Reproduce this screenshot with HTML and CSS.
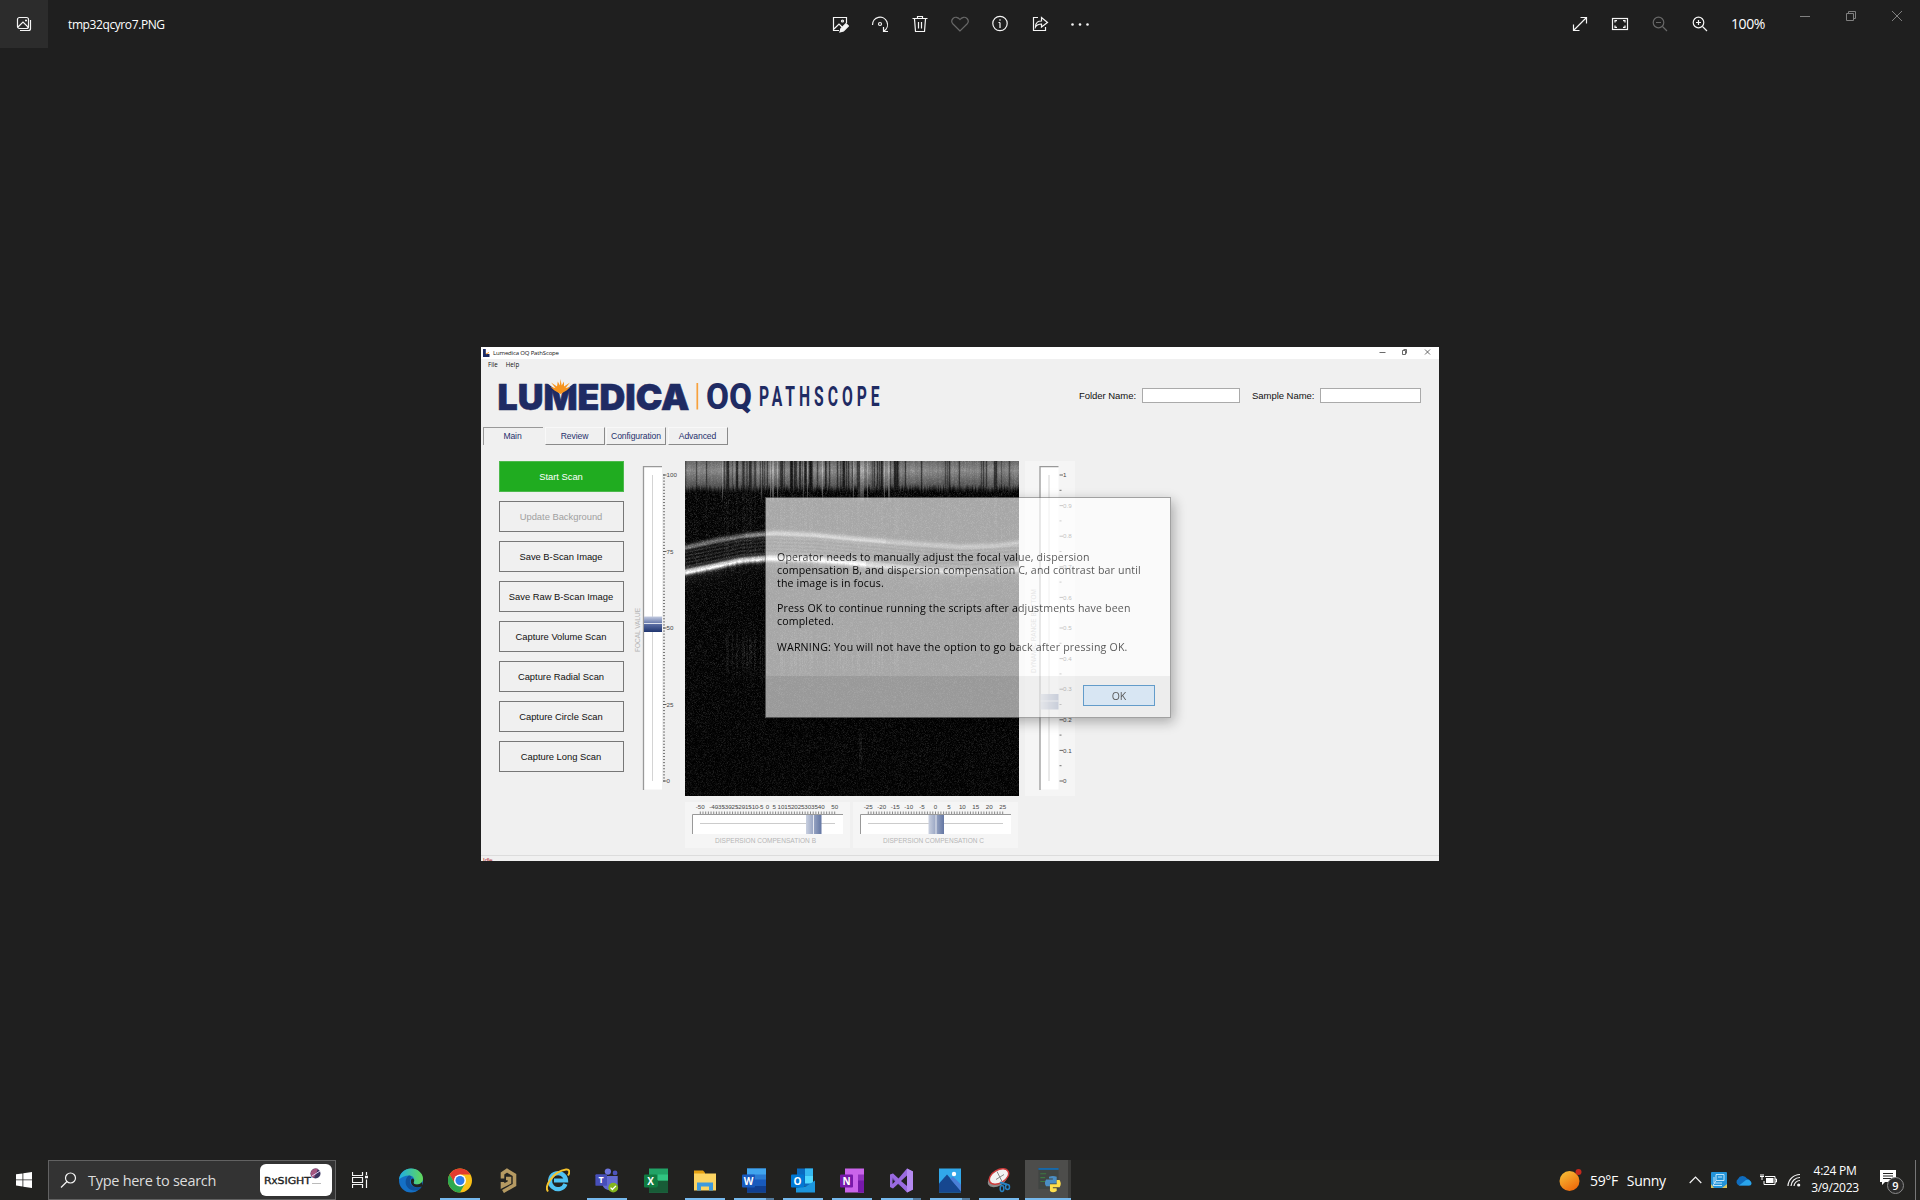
FILE: index.html
```html
<!DOCTYPE html>
<html lang="en">
<head>
<meta charset="utf-8">
<title>tmp32qcyro7.PNG</title>
<link rel="stylesheet" href="styles.css">
</head>
<body>
<header class="viewer-bar">
  <div class="viewer-tile">
    <svg width="16" height="16" viewBox="0 0 16 16" class="line"><rect x="1.5" y="1.5" width="11" height="11" rx="2"/><path d="M4 14.5h8.5a2 2 0 0 0 2-2V4M2 11l5-5 5.5 5.500"/><path d="M9 4.500h2M10 3.500v2"/></svg>
  </div>
  <div class="file-name">tmp32qcyro7.PNG</div>
  <nav class="tools">
    <svg viewBox="0 0 18 18" class="line"><path d="M8 15.500H2.500v-13h13V8M3 14l5-5 3 3"/><circle cx="11.500" cy="6" r="1"/><path class="solid" d="M9 17l1-3.500 5-5 2.500 2.500-5 5z"/></svg>
    <svg viewBox="0 0 18 18" class="line"><path d="M1.500 10a7.500 7.500 0 1 1 11.500 6M12.500 12v4.500H17"/><circle cx="9" cy="9" r="1.500"/></svg>
    <svg viewBox="0 0 18 18" class="line"><path d="M1.500 3.500h15M6.500 3.500v-2h5v2M3.500 4l1 12.500h9l1-12.500M7.500 7v6.500M10.500 7v6.500"/></svg>
    <svg viewBox="0 0 18 18" class="line dim"><path d="M9 16L2 9a4 4 0 0 1 0-5.500c2-2 5-1.500 7 1 2-2.500 5-3 7-1A4 4 0 0 1 16 9z"/></svg>
    <svg viewBox="0 0 18 18" class="line"><circle cx="9" cy="8.500" r="7.200"/><path d="M9 7.500V13M7.500 7.500H9M9 4.300v1.400"/></svg>
    <svg viewBox="0 0 18 18" class="line"><path d="M7 2.500H2.500v13h12V12M4.500 12c0-5 3-6 6-6V2.500L16.500 7.500l-6 4.500V9c-3 0-4.500.5-6 3z"/></svg>
    <svg viewBox="0 0 18 18" class="dots"><circle cx="1.500" cy="9.500" r="1.300"/><circle cx="9" cy="9.500" r="1.300"/><circle cx="16.500" cy="9.500" r="1.300"/></svg>
  </nav>
  <nav class="zoom-tools">
    <svg viewBox="0 0 18 18" class="line"><path d="M2.500 15.500l13-13M9.500 2.500h6v6M2.500 9.500v6h6"/></svg>
    <svg viewBox="0 0 18 18" class="line"><rect x="1.500" y="3.500" width="15" height="11"/><path d="M4 7.500V5.700h2M12 5.700h2v1.800M14 10.500v1.800h-2M6 12.300H4v-1.800"/></svg>
    <svg viewBox="0 0 18 18" class="line dim"><circle cx="7.500" cy="7.500" r="5.300"/><path d="M5 7.500h5M11.500 11.500l4.500 4.500"/></svg>
    <svg viewBox="0 0 18 18" class="line"><circle cx="7.500" cy="7.500" r="5.300"/><path d="M5 7.500h5M7.500 5v5M11.500 11.500l4.500 4.500"/></svg>
  </nav>
  <div class="zoom-level">100%</div>
  <div class="caption">
    <svg viewBox="0 0 12 12" class="line"><path d="M1 6.500h10"/></svg>
    <svg viewBox="0 0 12 12" class="line"><path d="M1.500 3.500h7v7h-7zM3.500 3.500v-2h7v7h-2"/></svg>
    <svg viewBox="0 0 12 12" class="line"><path d="M1 1l10 10M11 1L1 11"/></svg>
  </div>
</header>

<main class="stage">
  <section class="app">
    <div class="titlebar">
      <svg width="7" height="8" viewBox="0 0 7 8"><path d="M0 0h2.800v5H6.500v3H0z" fill="#1c2b63"/><path d="M3 5l3-1.500" stroke="#f7941d"/></svg>
      <span class="app-title">Lumedica OQ PathScope</span>
      <svg class="winbtns" width="56" height="10" viewBox="0 0 56 10"><path d="M1.500 5.500h6M24.500 3.500h3v4h-3zM25.500 2.500h3v4M47 2.500l5 5M52 2.500l-5 5"/></svg>
    </div>
    <div class="menubar"><span>File</span><span>Help</span></div>
    <div class="brand-row">
      <svg class="logo" width="384" height="38" viewBox="0 0 384 38">
        <text x="-1.500" y="32.500" class="logo-main" textLength="192" lengthAdjust="spacingAndGlyphs">LUMEDICA</text>
        <path class="sun-gap" d="M47.500 5.500l14 11.500L76 5.500z"/>
        <path class="sun" d="M61.500 17l-6-3.500-4-3.500 5 1-4.500-5.500 6 4L58.800 4.500l2 4L61.500 2l1.200 6.500 2.300-4v5l6-4-4.500 5.500 5-1-4 3.500z"/>
        <path d="M198.300 6v26.500" stroke="#f7a13d" stroke-width="1.700"/>
        <text x="207" y="32.300" class="logo-oq" textLength="46" lengthAdjust="spacingAndGlyphs">OQ</text>
        <text x="0" y="0" transform="translate(260 29.300) scale(.58 1)" class="logo-path" textLength="208">PATHSCOPE</text>
      </svg>
      <div class="fields">
        <span class="field-label folder">Folder Name:</span><span class="input w98"></span>
        <span class="field-label sample">Sample Name:</span><span class="input w101"></span>
      </div>
    </div>
    <div class="tabs"><span class="tab on">Main</span><span class="tab">Review</span><span class="tab">Configuration</span><span class="tab">Advanced</span></div>
    <div class="work">
      <div class="buttons">
        <span class="btn start">Start Scan</span><span class="btn off">Update Background</span><span class="btn">Save B-Scan Image</span><span class="btn">Save Raw B-Scan Image</span><span class="btn">Capture Volume Scan</span><span class="btn">Capture Radial Scan</span><span class="btn">Capture Circle Scan</span><span class="btn">Capture Long Scan</span>
      </div>
      <svg class="slider-focal" id="focal" width="50" height="335"></svg>
      <div class="scan-col">
        <canvas id="scan" width="334" height="335"></canvas>
        <div class="disp-row">
          <svg class="panel" id="dispB" width="165" height="46"></svg>
          <svg class="panel" id="dispC" width="165" height="46"></svg>
        </div>
      </div>
      <svg class="panel slider-range" id="range" width="50" height="335"></svg>
    </div>
    <div class="status"><span class="status-text">Idle</span></div>
    <div class="dialog">
      <div class="dialog-body">
        <p>Operator needs to manually adjust the focal value, dispersion<br>compensation B, and dispersion compensation C, and contrast bar until<br>the image is in focus.</p>
        <p>Press OK to continue running the scripts after adjustments have been<br>completed.</p>
        <p class="warn">WARNING: You will not have the option to go back after pressing OK.</p>
      </div>
      <div class="dialog-foot"><span class="ok">OK</span></div>
    </div>
  </section>
</main>

<footer class="taskbar">
  <div class="start-btn"><svg width="16" height="16" viewBox="0 0 16 16"><path fill="#fff" d="M0 2.300L6.500 1.400v6.100H0zM7.300 1.300L16 0v7.500H7.300zM0 8.300h6.500v6.200L0 13.600zM7.300 8.300H16V16l-8.700-1.300z"/></svg></div>
  <div class="search">
    <svg width="17" height="17" viewBox="0 0 17 17" class="line"><circle cx="10.500" cy="6" r="5"/><path d="M7 9.500L1 15.500"/></svg>
    <span class="search-text">Type here to search</span>
    <span class="pill"><svg width="72" height="32" viewBox="0 0 72 32"><text x="4" y="20" class="rx" textLength="47" lengthAdjust="spacingAndGlyphs">R<tspan class="rx-x">X</tspan>SIGHT</text><circle cx="55.500" cy="9.500" r="5" fill="#3a3561"/><path d="M51 8a5 5 0 0 1 7-3l-4 9a5 5 0 0 1-3-6z" fill="#a4557f"/><path d="M52 12l8-5" stroke="#dce" stroke-width="1"/><path d="M52 19.500h9" stroke="#bbb"/></svg></span>
  </div>
  <div class="taskview"><svg width="17" height="16" viewBox="0 0 17 16" class="line"><path d="M.5 0v3.500h10V0M.5 16v-3.500h10V16M.5 5.500h10v5H.5zM14.500 0v3M14.500 7.500V16"/><path d="M13 5h3" stroke-width="2.500"/></svg></div>
  <div class="apps">
    <div class="cell"><svg viewBox="0 0 24 24"><defs><linearGradient id="eg" x2="1"><stop stop-color="#1eaee5"/><stop offset="1" stop-color="#62d957"/></linearGradient></defs><circle cx="12" cy="12" r="12" fill="#1470c6"/><path d="M0 11C1 4 6 0 12 0c7 0 12 5 12 10 0 4-3 6-6 6-3 0-4-1-3-3 1-3-1-6-5-6-4 0-8 2-10 4z" fill="url(#eg)"/><path d="M10 7c-6 4-4 15 6 15 3 0 5-1 7-4-4 2-11 1-12-4-.3-2 0-3 1-4 1-2 0-3-2-3z" fill="#10519b"/><path d="M15 13c-1 2 0 3 3 3 2 0 4-1 5-2.500V18c-4 1.500-10 1-11-4-.3-2 0-3 1-4 2 0 2.500 1.500 2 3z" fill="#222220"/></svg></div>
    <div class="cell run"><svg viewBox="0 0 24 24"><circle cx="12" cy="12" r="12" fill="#fbc116"/><path d="M1.600 6A12 12 0 0 1 22.400 6H12l-5 9z" fill="#e33b2e"/><path d="M1.600 6A12 12 0 0 0 12 24l5-9-10 0z" fill="#2da94f"/><circle cx="12" cy="12" r="6" fill="#fff"/><circle cx="12" cy="12" r="4.500" fill="#2f7de9"/></svg></div>
    <div class="cell"><svg viewBox="0 0 24 24" fill="none" stroke="#b59a62" stroke-width="3.600"><path d="M5.500 10V5l4.500-3L17.500 6.500v10L6 23M5.500 13.500v4l7-3.500v-4H9"/></svg></div>
    <div class="cell"><svg viewBox="0 0 24 24"><path d="M19.500 15.500A8 8 0 1 1 20 12H8" fill="none" stroke="#4fc3f3" stroke-width="4.200"/><path d="M2 23C-2 18 7 3 20 1c4-.5 4 3 2 6" fill="none" stroke="#f5c32c" stroke-width="2"/></svg></div>
    <div class="cell run"><svg viewBox="0 0 26 28"><circle cx="14" cy="4" r="3.500" fill="#6d74dc"/><circle cx="22" cy="5.500" r="2.700" fill="#4d55bd"/><path d="M8 9h17v9c0 5-4 7-8 7s-8-2-9-6z" fill="#636bd2"/><rect y="7" width="13" height="13" rx="1" fill="#474fb9"/><text x="6.500" y="17" class="ico">T</text><circle cx="20" cy="22" r="5.500" fill="#83b51d"/><path d="M17 22l2 2 4-4" stroke="#fff" fill="none" stroke-width="1.500"/></svg></div>
    <div class="cell"><svg viewBox="0 0 24 24"><path d="M5 0h19v24H5z" fill="#21a366"/><path d="M5 12h19v12H5z" fill="#185c37"/><path d="M14 6h10v6H14z" fill="#31c481"/><path d="M5 12h9v6H5z" fill="#107c41"/><rect y="6" width="13" height="13" rx="1" fill="#107c41"/><text x="6.500" y="16.500" class="ico">X</text></svg></div>
    <div class="cell run"><svg viewBox="0 0 24 24"><path d="M1 2h9l2 2v5H1z" fill="#e5a112"/><path d="M1 5h22v17H1z" fill="#fcd462"/><path d="M4 22v-8h16v8h-4v-4H8v4z" fill="#3e9ade"/></svg></div>
    <div class="cell run more"><svg viewBox="0 0 24 24"><path d="M5 0h19v24H5z" fill="#2b7cd3"/><path d="M5 0h19v6H5z" fill="#41a5ee"/><path d="M5 17h19v7H5z" fill="#103f91"/><path d="M5 11h19v6H5z" fill="#185abd"/><rect y="6" width="13" height="13" rx="1" fill="#185abd"/><text x="6.500" y="16.500" class="ico">W</text></svg></div>
    <div class="cell run"><svg viewBox="0 0 24 24"><path d="M6 0h16v18H6z" fill="#0a6abf"/><path d="M14 0h8v7h-8z" fill="#35b8f1"/><path d="M14 7h8v8h-8z" fill="#50d9ff"/><path d="M5 24h19V12l-9 6-10 1z" fill="#1c96dd"/><rect y="6" width="13" height="13" rx="1" fill="#0078d4"/><text x="6.500" y="16.500" class="ico">O</text></svg></div>
    <div class="cell run"><svg viewBox="0 0 24 24"><path d="M5 0h19v24H5z" fill="#ca64ea"/><path d="M18 6h6v18h-6z" fill="#9332bf"/><path d="M18 12h6v12h-6z" fill="#7719aa"/><rect y="6" width="13" height="13" rx="1" fill="#7719aa"/><text x="6.500" y="16.500" class="ico">N</text></svg></div>
    <div class="cell run more"><svg viewBox="0 0 24 24"><path d="M1 7l3-2 14 15v3L1 9z" fill="#6a48a5"/><path fill-rule="evenodd" d="M18 0l6 3v18l-6 3L9.500 15 4 20l-3-1.500V6l3-1 5.500 5zM3.500 9v6.500L6.500 12.500zM18 7l-6 5.500 6 5z" fill="#9a6be0"/><path d="M18 0l6 3v18l-6 3z" fill="#b58af0"/></svg></div>
    <div class="cell run more"><svg viewBox="0 0 24 24"><path d="M1 0h22v24H1z" fill="#31a8ea"/><path d="M1 15L9 6l14 16v2H1z" fill="#16478f"/><path d="M12 10l3-2 8 8v7z" fill="#4a7fd8"/><circle cx="16" cy="5.500" r="2.200" fill="#fff"/></svg></div>
    <div class="cell run"><svg viewBox="0 0 24 24"><ellipse cx="10.500" cy="11" rx="10.500" ry="6.500" transform="rotate(-30 10.500 11)" fill="#8b8b8b"/><ellipse cx="12" cy="8" rx="10.500" ry="6.500" transform="rotate(-30 12 8)" fill="#f3f3f3" stroke="#cf3b3b" stroke-width="1.500"/><path d="M10 3l5 10M17 6l-8 5" stroke="#888"/><path d="M13 14l7 2" stroke="#2682c4" stroke-width="2"/><g fill="none" stroke="#2682c4" stroke-width="1.500"><ellipse cx="15" cy="20" rx="1.800" ry="3"/><ellipse cx="20.500" cy="18.500" rx="2" ry="2.500"/></g></svg></div>
    <div class="cell run active"><svg viewBox="0 0 24 26"><path d="M1 0h21v22H1z" fill="#404542"/><path d="M1 0h21v2H1z" fill="#1769aa"/><path d="M3 6h6M3 10h5M3 14h5" stroke="#3d7a42" stroke-width="1.200"/><path d="M12 9q4-1.500 8 0v7h-7v3H9q-2.500-3 0-7h7v-1h-4z" fill="#4b8ec4"/><path d="M20 12.500h3q2.500 4 0 7.500h-7v1h4v3q-4 2.500-7 0v-7h7z" fill="#ffdf4c"/></svg></div>
  </div>
  <div class="weather"><svg width="24" height="24" viewBox="0 0 24 24"><defs><linearGradient id="wg" x2=".6" y2="1"><stop stop-color="#f8c53a"/><stop offset="1" stop-color="#ef6c0c"/></linearGradient></defs><circle cx="10.500" cy="13" r="10" fill="url(#wg)"/><circle cx="19.500" cy="4" r="3" fill="#c5281c"/></svg><span class="temp">59°F</span><span>Sunny</span></div>
  <div class="tray">
    <svg width="13" height="8" viewBox="0 0 13 8" class="line"><path d="M.7 7L6.500 1.200 12.300 7"/></svg>
    <svg width="16" height="16" viewBox="0 0 16 16"><rect width="16" height="16" rx="1" fill="#2393d8"/><path d="M5 2.500h8v6H5zM3 5v6h8M5 8.500l-3 5h9M7 5h4" fill="none" stroke="#bfe5fa" stroke-width="1"/><path d="M0 12l3 4H0zM11 16l5-4v4z" fill="#d9c45d"/></svg>
    <svg width="17" height="11" viewBox="0 0 17 11"><path d="M4 10.500A3.700 3.700 0 0 1 3 4a5 5 0 0 1 9-.5 4 4 0 0 1 2 7z" fill="#0f6cbd"/><path d="M4 10.500L11 5a4 4 0 0 1 5.500 3c0 2-1 2.500-2.500 2.500z" fill="#2aa4ea"/></svg>
    <svg width="17" height="12" viewBox="0 0 17 12"><path d="M5 2.500h10v8H4V7M15 5h1.500v3H15" fill="none" stroke="#fff"/><path d="M6 4h7.500v5H6z" fill="#fff"/><path d="M0 2.500h4M1 0v2M3 0v2M2 3v3" stroke="#fff"/></svg>
    <svg width="14" height="14" viewBox="0 0 14 14" class="line"><path d="M1 13A12 12 0 0 1 13 1.500M4 13a9 9 0 0 1 9-8.500M7 13a6 6 0 0 1 6-5.500"/><circle cx="11.700" cy="12" r="1" fill="#fff"/></svg>
  </div>
  <div class="clock"><span>4:24 PM</span><span>3/9/2023</span></div>
  <div class="notify"><svg width="26" height="26" viewBox="0 0 26 26"><path d="M1 1h16v12H6l-3 3v-3H1z" fill="#fff"/><path d="M4 4.500h10M4 7h10M4 9.500h8" stroke="#222"/><circle cx="16.500" cy="16.500" r="8" fill="#2b2b2b" stroke="#8a8a8a"/><text x="16.500" y="20.500" class="badge">9</text></svg></div>
  <div class="desk-edge"></div>
</footer>
<script src="app.js"></script>
</body>
</html>
```
FILE: styles.css
```css
* { box-sizing: border-box; }
body { margin: 0; width: 1920px; height: 1200px; overflow: hidden; display: flex; flex-direction: column; background: #1f1f1f; color: #fff; font-family: "Open Sans", "Noto Sans", sans-serif; }
svg { display: block; flex: none; }
.line { fill: none; stroke: #f5f5f5; stroke-width: 1.2; }
.line.dim { stroke: #686868; }
.solid { fill: #f5f5f5; }
.dots { fill: #f5f5f5; }

.viewer-bar { height: 48px; display: flex; align-items: center; flex: none; }
.viewer-tile { width: 48px; height: 48px; background: #2c2c2c; display: flex; align-items: center; justify-content: center; }
.file-name { width: 783px; padding-left: 20px; font-size: 12px; letter-spacing: -0.4px; }
.tools, .zoom-tools { display: flex; gap: 22px; }
.tools svg, .zoom-tools svg { width: 18px; height: 18px; }
.zoom-tools { margin-left: 482px; }
.zoom-level { margin-left: 22px; width: 68px; font-size: 14px; letter-spacing: -0.4px; position: relative; top: -1px; }
.caption { display: flex; gap: 34px; align-self: flex-start; padding-top: 10px; }
.caption svg { width: 12px; height: 12px; }
.caption .line { stroke: #808080; stroke-width: 1; }

.stage { flex: 1; display: flex; align-items: center; justify-content: center; }
.app { position: relative; width: 958px; height: 514px; overflow: hidden; background: #f0f0f0; color: #111; font-family: "Liberation Sans", Arial, sans-serif; display: flex; flex-direction: column; }
.titlebar { height: 12px; background: #fff; display: flex; align-items: center; padding-left: 2px; font: 6px "Open Sans", sans-serif; flex: none; }
.app-title { margin-left: 3px; flex: 1; letter-spacing: -0.16px; }
.winbtns { margin: -2px 5px 0 0; fill: none; stroke: #444; stroke-width: 0.8; }
.menubar { height: 11px; display: flex; gap: 8px; padding: 0 0 1px 7px; align-items: center; font: 6.2px "Open Sans", sans-serif; flex: none; }
.brand-row { height: 57px; display: flex; padding: 7px 18px 0; justify-content: space-between; flex: none; }
.logo { overflow: visible; }
.logo-main { font: 900 36px Inter, sans-serif; fill: #1f2b63; stroke: #1f2b63; stroke-width: 0.6; }
.logo-oq { font: 800 36px Roboto, sans-serif; fill: #1f2b63; }
.logo-path { font: 700 27px Roboto, sans-serif; fill: #1f2b63; }
.sun-gap { fill: #f0f0f0; }
.sun { fill: #f7941d; }
.fields { display: flex; align-items: center; height: 37px; font-size: 9.5px; letter-spacing: -0.04px; }
.field-label { white-space: nowrap; }
.folder { width: 63px; }
.sample { width: 68px; margin-left: 12px; }
.input { height: 15px; background: #fff; border: 1px solid #aaa; }
.w98 { width: 98px; }
.w101 { width: 101px; }
.tabs { display: flex; height: 18px; padding-left: 2px; gap: 1.5px; flex: none; }
.tab { width: 60px; display: flex; align-items: center; justify-content: center; font-size: 8.6px; letter-spacing: -0.1px; color: #26306c; border: 1px solid #f8f8f8; border-right: 1.5px solid #8a8a8a; border-bottom: 1.5px solid #8a8a8a; }
.tab.on { border: 1px solid #999; border-right: 0; border-bottom: 0; padding: 0 2px 2px 0; }
.work { display: flex; padding: 16px 0 0 18px; height: 410px; flex: none; align-items: flex-start; }
.buttons { display: flex; flex-direction: column; gap: 9px; width: 125px; }
.btn { height: 31px; display: flex; align-items: center; justify-content: center; padding: 0 1px 1px 0; border: 1px solid #777; font-size: 9.4px; letter-spacing: -0.02px; }
.start { background: #20ac20; border-color: #4cb94c; color: #fff; }
.off { color: #a0a0a0; }
.slider-focal { margin: 0 5px 0 6px; }
.scan-col { display: flex; flex-direction: column; gap: 6px; width: 334px; }
canvas { display: block; }
.disp-row { display: flex; gap: 3px; }
.panel { background: #f5f5f5; }
.slider-range { margin-left: 6px; }
.num { font-size: 6.2px; fill: #484848; }
.cap { font-size: 7px; fill: #b5b5b5; }
.status { border-top: 1px solid #dcdcdc; height: 8px; padding: 1px 0 0 2px; line-height: 7px; font-size: 6px; color: #a22; flex: none; }
.status-text { display: block; }

.dialog { position: absolute; left: 284px; top: 150px; width: 406px; height: 221px; opacity: .65; background: #fff; border: 1px solid #777; box-shadow: 3px 4px 12px rgba(0,0,0,.45); color: #000; font-family: "Open Sans", "Noto Sans", sans-serif; display: flex; flex-direction: column; }
.dialog-body { height: 178px; padding: 53px 0 0 11px; font-size: 10.6px; letter-spacing: 0.15px; line-height: 12.8px; white-space: nowrap; }
.dialog-body p { margin: 0 0 12.8px; }
.dialog-body .warn { letter-spacing: 0.2px; }
.dialog-foot { flex: 1; background: #ececec; display: flex; justify-content: flex-end; padding: 9px 15px 0 0; }
.ok { width: 72px; height: 21px; display: flex; align-items: center; justify-content: center; background: #cbe1f5; border: 1.5px solid #176fb5; font-size: 10.5px; }

.taskbar { height: 40px; background: #222220; display: flex; align-items: center; flex: none; }
.start-btn { width: 48px; padding-left: 16px; }
.search { width: 288px; height: 40px; background: #333; border: 1px solid #626262; display: flex; align-items: center; padding: 0 3px 0 11px; }
.search-text { flex: 1; margin-left: 11px; font-size: 14.5px; letter-spacing: -0.28px; color: #ddd; white-space: nowrap; }
.pill { background: #fff; border-radius: 6px; }
.rx { font: 9.5px "DejaVu Sans", sans-serif; fill: #222; stroke: #222; stroke-width: 0.35; }
.rx-x { font-size: 7.5px; }
.taskview { width: 51px; padding-left: 16px; }
.apps { display: flex; gap: 1px; }
.cell { width: 48px; height: 40px; display: flex; align-items: center; justify-content: center; position: relative; }
.cell svg { width: 24px; height: 25px; }
.run::after { content: ""; position: absolute; left: 4px; right: 4px; bottom: 0; height: 2px; background: #76b9ed; }
.more::after { background: linear-gradient(90deg, #76b9ed 32px, #527a9c 32px); }
.active { background: linear-gradient(90deg, #4d4d4b 43px, #3a3a38 43px); width: 46px; margin-left: 1px; padding-left: 2px; }
.active::after { left: 0; right: 0; }
.ico { font: 700 10px "Open Sans", sans-serif; fill: #fff; text-anchor: middle; }
.weather { margin-left: 488px; display: flex; align-items: center; width: 124px; font-size: 14px; letter-spacing: -0.35px; }
.temp { margin: 0 9px 0 7px; }
.tray { display: flex; align-items: center; gap: 8px; margin-left: 6px; width: 125px; }
.tray svg:first-child { margin-right: 1px; }
.tray svg:last-child { margin-left: 2px; }
.clock { width: 60px; margin-left: -9px; display: flex; flex-direction: column; align-items: center; font-size: 12px; line-height: 17.5px; letter-spacing: -0.3px; position: relative; top: -1px; }
.notify { margin-left: 14px; padding-top: 4px; }
.badge { font: 600 11px "Open Sans", sans-serif; fill: #fff; text-anchor: middle; }
.desk-edge { margin-left: auto; margin-right: 4px; width: 1px; height: 40px; background: #777; }
```
FILE: app.js
```js
// Slider scales
const defs = id => `<defs><linearGradient id="${id}v" x2="0" y2="1"><stop stop-color="#c3cbe0"/><stop offset=".5" stop-color="#5a6da3"/><stop offset="1" stop-color="#1f356f"/></linearGradient><linearGradient id="${id}h"><stop stop-color="#c9d0e0"/><stop offset="1" stop-color="#6376a3"/></linearGradient></defs>`;

function vertical(id, x, marks, minor, thumbY, caption, capX, capY, capLen, faded) {
  let s = defs(id);
  s += `<rect x="${x}" y="5.500" width="19" height="323" fill="#fff"/><path d="M${x + .5} 329V5.700h18.500" fill="none" stroke="#999" stroke-width="1.300"/>`;
  s += `<path d="M${x + 9.500} 14v306" stroke="#d4d4d4"/>`;
  for (const y of minor) s += `<path d="M${x + 20} ${y}h2" stroke="#666" stroke-width=".9"/>`;
  for (const [y, t] of marks) s += `<path d="M${x + 20} ${y}h3.500" stroke="#555" stroke-width=".9"/><text class="num" x="${x + 23.500}" y="${y + 2.200}">${t}</text>`;
  s += `<g opacity="${faded ? .75 : 1}"><rect x="${x + 1}" y="${thumbY}" width="18" height="15.500" fill="url(#${id}${faded ? 'h' : 'v'})"/><path d="M${x + 1} ${thumbY + 7}h18" stroke="#dfe3ee"/></g>`;
  s += `<text class="cap" transform="translate(${capX} ${capY}) rotate(-90)" textLength="${capLen}" lengthAdjust="spacingAndGlyphs">${caption}</text>`;
  document.getElementById(id).innerHTML = s;
}
const focalMinor = [];
for (let i = 0; i <= 100; i++) focalMinor.push(14 + i * 3.06);
vertical('focal', 13, [100, 75, 50, 25, 0].map((v, i) => [14 + i * 76.5, v]), focalMinor, 155.5, 'FOCAL VALUE', 10, 191, 44, false);
const rangeMarks = [], rangeMinor = [];
for (let i = 0; i <= 10; i++) {
  rangeMarks.push([14 + i * 30.6, i === 0 ? '1' : i === 10 ? '0' : '0.' + (10 - i)]);
  if (i < 10) rangeMinor.push(29.300 + i * 30.6);
}
vertical('range', 14.5, rangeMarks, rangeMinor, 233, 'DYNAMIC RANGE BOTTOM', 10.500, 212, 84, true);

function horizontal(id, labels, max, count, thumbX, caption) {
  const pos = v => 82.5 + v / max * 67.2;
  let s = defs(id);
  for (let i = 0; i <= count; i++) s += `<path d="M${15.300 + i * 134.4 / count} 9.500v2.500" stroke="#888" stroke-width="1"/>`;
  for (const v of labels) s += `<text class="num" text-anchor="middle" x="${pos(v)}" y="7.300">${v}</text>`;
  s += `<rect x="7" y="12" width="151" height="20" fill="#fff"/><path d="M7.500 32V12.500H158" fill="none" stroke="#999"/><path d="M15 21.500h135" stroke="#ccc"/>`;
  s += `<rect x="${thumbX}" y="13" width="15.500" height="19" fill="url(#${id}h)"/><path d="M${thumbX + 7.500} 13v19" stroke="#e6e9f1"/>`;
  s += `<text class="cap" x="30" y="41" textLength="101" lengthAdjust="spacingAndGlyphs">${caption}</text>`;
  document.getElementById(id).innerHTML = s;
}
const b = [-50];
for (let v = -40; v <= 40; v += 5) b.push(v);
b.push(50);
horizontal('dispB', b, 50, 50, 121, 'DISPERSION COMPENSATION B');
horizontal('dispC', [-25, -20, -15, -10, -5, 0, 5, 10, 15, 20, 25], 25, 50, 75.5, 'DISPERSION COMPENSATION C');

// B-scan: saturated band on top, two tissue surfaces, speckle noise
let seed = 7;
const rnd = () => (seed = (seed * 16807) % 2147483647) / 2147483647;
const W = 334, H = 335;
const ctx = document.getElementById('scan').getContext('2d');
const img = ctx.createImageData(W, H);
const curve = (pts, x) => {
  for (let i = 1; i < pts.length; i++) if (x <= pts[i][0]) {
    const [x0, y0] = pts[i - 1], [x1, y1] = pts[i];
    return y0 + (y1 - y0) * (x - x0) / (x1 - x0);
  }
  return pts[pts.length - 1][1];
};
const upper = [[0, 86], [30, 79], [60, 74], [90, 71.5], [130, 73.5], [170, 77.5], [215, 81], [275, 85], [310, 84], [334, 81]];
const lower = [[0, 111], [25, 106], [55, 99.5], [85, 97], [130, 98.500], [180, 103], [230, 108], [280, 111], [334, 108]];
const raw = [], hits = [];
for (let x = 0; x < W; x++) {
  const busy = x > 35 && x < 215 ? .42 : .15;
  hits[x] = rnd() < busy;
  raw[x] = hits[x] ? .1 + rnd() * .4 : .8 + rnd() * .15;
}
for (let x = 0; x < W; x++) {
  const hit = hits[x];
  const col = raw[x] * .68 + ((raw[x - 1] ?? .8) + (raw[x + 1] ?? .8)) * .16;
  const glow = x > 172 && x < 179 ? 1.35 : !hit && x > 35 && x < 215 && rnd() < .12 ? 1.3 : 1;
  const beam = .78 + col * .2;
  const yu = curve(upper, x), yl = curve(lower, x);
  const reach = 29 + (glow > 1 ? 14 : rnd() * 4);
  for (let y = 0; y < H; y++) {
    let v = rnd() * rnd() * (46 - 14 * y / H);
    if (y < reach) {
      v *= .5;
      v += (150 - Math.abs(y - 9) * 3.7) * col * glow * Math.min(1, (reach - y) / 7);
    }
    const du = y - yu, dl = y - yl;
    v += (x < 60 ? 100 : 130) * Math.exp(-du * du / 7) * beam * (x > 200 ? .7 : 1);
    v += (dl < 0 ? 230 * Math.exp(-dl * dl / 12) : 230 * Math.exp(-dl * dl / 8)) * beam * (x > 180 ? .65 : 1);
    if (y > yu && y < yl) v += (20 + 13 * Math.sin((y - yl) * 1.8)) * beam;
    if (dl > 0) v += 45 * Math.exp(-dl / 7) * beam * col;
    if (y > 25 && y < yl) v += hit ? 14 * rnd() : 0;
    if (y > 165 && y < 220 && x > 40 && x < 215) v += hit ? 28 * rnd() * Math.sin((y - 165) / 55 * Math.PI) : 0;
    if (x > 173 && x < 177 && y > 265 && y < 312) v += 30 * rnd() * Math.sin((y - 265) / 47 * Math.PI);
    const k = (y * W + x) * 4;
    img.data[k] = img.data[k + 1] = img.data[k + 2] = Math.min(255, v);
    img.data[k + 3] = 255;
  }
}
ctx.putImageData(img, 0, 0);
```
